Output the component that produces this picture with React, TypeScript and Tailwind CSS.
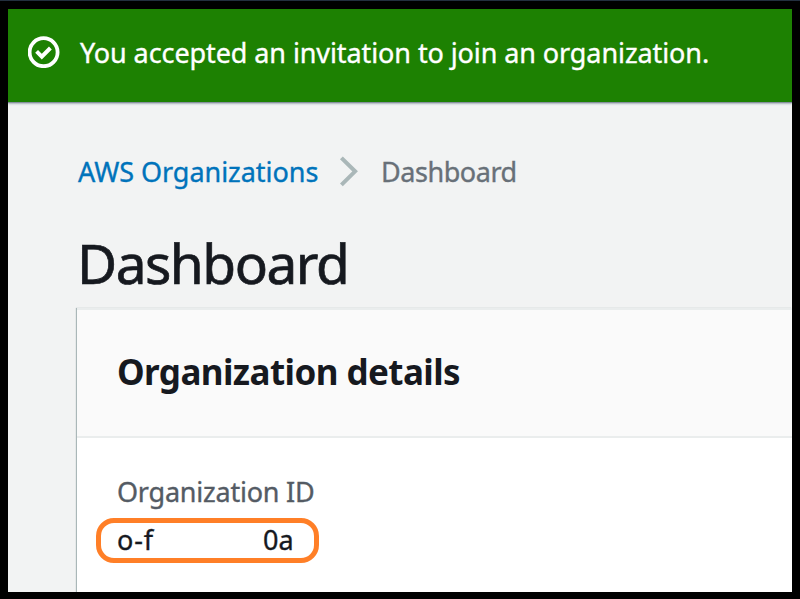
function SuccessIcon() {
  return (
    <svg className="h-8 w-8 shrink-0" viewBox="0 0 32 32" fill="none" stroke="#fff">
      <circle cx="15.6" cy="16.2" r="14" strokeWidth="3.8" />
      <path d="M8.6 15.4 L13.8 20.6 L22.4 12" strokeWidth="4" />
    </svg>
  );
}

function Banner() {
  return (
    <header className="flex h-[93px] shrink-0 items-start bg-[#1d8102] pl-5 text-white shadow-[0_1px_1px_0_#87919e,0_2px_2px_0_#b4bdc4]">
      <div className="mt-[27px]">
        <SuccessIcon />
      </div>
      <p className="mt-[26px] ml-5 text-[27px] leading-[36px] tracking-[-0.09px] whitespace-nowrap">
        You accepted an invitation to join an organization.
      </p>
    </header>
  );
}

function Breadcrumbs() {
  return (
    <nav className="mt-[52px] ml-[70px] flex h-[36px] items-start text-[27px] leading-[36px] whitespace-nowrap">
      <a className="w-[261px] tracking-[-0.04px] text-[#0073bb]">AWS Organizations</a>
      <svg className="mt-[1px] h-[32px] w-[20px] shrink-0" viewBox="0 0 20 32" fill="none">
        <path d="M2.4 2.8 L16.1 16.3 L2.4 29.8" stroke="#aab7b8" strokeWidth="4" />
      </svg>
      <span className="ml-[22px] tracking-[-0.45px] text-[#687078]">Dashboard</span>
    </nav>
  );
}

function DetailsCard() {
  return (
    <section className="ml-[69px] flex flex-1 flex-col border-t-2 border-[#eaeded] bg-white shadow-[-1px_0_1px_0_#aab7b8]">
      <div className="h-[128px] shrink-0 border-b-2 border-[#eaeded] bg-[#fafafa] pt-[38px] pl-[40px]">
        <h2 className="text-[35px] leading-[48px] font-bold tracking-[-0.57px] whitespace-nowrap [-webkit-text-stroke:0px]">
          Organization details
        </h2>
      </div>
      <div className="pt-[36px] pl-[40px]">
        <div className="text-[27px] leading-[36px] tracking-[-0.22px] whitespace-nowrap text-[#545b64]">
          Organization ID
        </div>
        <div className="mt-[8px] -ml-[21px] flex h-[45px] w-[223px] rounded-[18px] border-[5px] border-[#ff7f27] pl-4 text-[27px] leading-[34px]">
          <span className="w-[146px] tracking-[0.8px]">o-f</span>
          <span>0a</span>
        </div>
      </div>
    </section>
  );
}

export default function App() {
  return (
    <div className="h-[599px] w-[800px] overflow-hidden border-t border-[#232f3e] bg-black px-2 pt-2 pb-[7px] font-['Noto_Sans',sans-serif] text-[#16191f] [-webkit-text-stroke:0.35px]">
      <main className="flex h-[583px] flex-col overflow-hidden bg-[#f2f3f3]">
        <Banner />
        <Breadcrumbs />
        <h1 className="mt-[33px] ml-[69px] h-[85px] text-[55px] leading-[80px] tracking-[-1.5px] whitespace-nowrap [-webkit-text-stroke:0.7px]">
          Dashboard
        </h1>
        <DetailsCard />
      </main>
    </div>
  );
}
